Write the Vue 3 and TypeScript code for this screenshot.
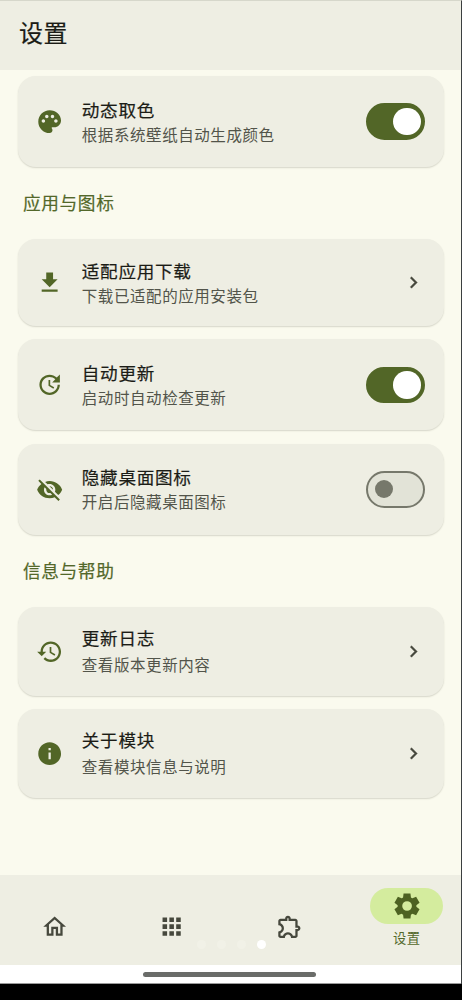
<script setup lang="ts">
interface Item {
  icon: string
  title: string
  desc: string
  size: 'tall' | 'short' | 'link'
  on?: boolean
}
interface Group {
  heading?: string
  items: Item[]
}

const icons: Record<string, string> = {
  palette:
    'M12 2C6.49 2 2 6.49 2 12s4.49 10 10 10c1.38 0 2.5-1.12 2.5-2.5 0-.61-.23-1.2-.64-1.67-.08-.1-.13-.21-.13-.33 0-.28.22-.5.5-.5H16c3.31 0 6-2.69 6-6 0-4.96-4.49-9-10-9zm5.5 11c-.83 0-1.5-.67-1.5-1.5s.67-1.5 1.5-1.5 1.5.67 1.5 1.5-.67 1.5-1.5 1.5zm-3-4c-.83 0-1.5-.67-1.5-1.5S13.67 6 14.5 6s1.5.67 1.5 1.5S15.33 9 14.5 9zM5 11.5c0-.83.67-1.5 1.5-1.5s1.5.67 1.5 1.5S7.33 13 6.5 13 5 12.33 5 11.5zm6-4c0 .83-.67 1.5-1.5 1.5S8 8.33 8 7.5 8.67 6 9.5 6s1.5.67 1.5 1.5z',
  download: 'M19 9h-4V3H9v6H5l7 7 7-7zM5 18v2h14v-2H5z',
  update:
    'M21 10.12h-6.78l2.74-2.82c-2.73-2.7-7.15-2.8-9.88-.1-2.73 2.71-2.73 7.08 0 9.79s7.15 2.71 9.88 0C18.32 15.65 19 14.08 19 12.1h2c0 1.98-.88 4.55-2.64 6.29-3.51 3.48-9.21 3.48-12.72 0-3.5-3.47-3.53-9.11-.02-12.58s9.14-3.47 12.65 0L21 3v7.12zM12.5 8v4.25l3.5 2.08-.72 1.21L11 13V8h1.5z',
  hidden:
    'M12 7c2.76 0 5 2.24 5 5 0 .65-.13 1.26-.36 1.83l2.92 2.92c1.51-1.26 2.7-2.89 3.43-4.75-1.73-4.39-6-7.5-11-7.5-1.4 0-2.74.25-3.98.7l2.16 2.16C10.74 7.13 11.35 7 12 7zM2 4.27l2.28 2.28.46.46C3.08 8.3 1.78 10.02 1 12c1.73 4.39 6 7.5 11 7.5 1.55 0 3.03-.3 4.38-.84l.42.42L19.73 22 21 20.73 3.27 3 2 4.27zM7.53 9.8l1.55 1.55c-.05.21-.08.43-.08.65 0 1.66 1.34 3 3 3 .22 0 .44-.03.65-.08l1.55 1.55c-.67.33-1.41.53-2.2.53-2.76 0-5-2.24-5-5 0-.79.2-1.53.53-2.2zm4.31-.78l3.15 3.15.02-.16c0-1.66-1.34-3-3-3l-.17.01z',
  history:
    'M13 3c-4.97 0-9 4.03-9 9H1l3.89 3.89.07.14L9 12H6c0-3.87 3.13-7 7-7s7 3.13 7 7-3.13 7-7 7c-1.93 0-3.68-.79-4.94-2.06l-1.42 1.42C8.27 19.99 10.51 21 13 21c4.97 0 9-4.03 9-9s-4.03-9-9-9zm-1 5v5l4.28 2.54.72-1.21-3.5-2.08V8H12z',
  info: 'M12 2C6.48 2 2 6.48 2 12s4.48 10 10 10 10-4.48 10-10S17.52 2 12 2zm1 15h-2v-6h2v6zm0-8h-2V7h2v2z',
}

const groups: Group[] = [
  { items: [{ icon: 'palette', title: '动态取色', desc: '根据系统壁纸自动生成颜色', size: 'tall', on: true }] },
  {
    heading: '应用与图标',
    items: [
      { icon: 'download', title: '适配应用下载', desc: '下载已适配的应用安装包', size: 'short' },
      { icon: 'update', title: '自动更新', desc: '启动时自动检查更新', size: 'tall', on: true },
      { icon: 'hidden', title: '隐藏桌面图标', desc: '开启后隐藏桌面图标', size: 'tall', on: false },
    ],
  },
  {
    heading: '信息与帮助',
    items: [
      { icon: 'history', title: '更新日志', desc: '查看版本更新内容', size: 'link' },
      { icon: 'info', title: '关于模块', desc: '查看模块信息与说明', size: 'link' },
    ],
  },
]

const tabs: string[] = [
  'M12 5.69l5 4.5V18h-2v-6H9v6H7v-7.81l5-4.5M12 3L2 12h3v8h6v-6h2v6h6v-8h3L12 3z',
  'M4 8h4V4H4v4zm6 12h4v-4h-4v4zm-6 0h4v-4H4v4zm0-6h4v-4H4v4zm6 0h4v-4h-4v4zm6-10v4h4V4h-4zm-6 4h4V4h-4v4zm6 6h4v-4h-4v4zm0 6h4v-4h-4v4z',
  'M10.5 4.5c.28 0 .5.22.5.5v2h6v6h2c.28 0 .5.22.5.5s-.22.5-.5.5h-2v6h-2.12c-.68-1.75-2.39-3-4.38-3s-3.7 1.25-4.38 3H4v-2.12c1.75-.68 3-2.39 3-4.38 0-1.99-1.24-3.7-2.99-4.38L4 7h6V5c0-.28.22-.5.5-.5m0-2C9.12 2.5 8 3.62 8 5H4c-1.1 0-1.99.9-1.99 2v3.8h.29c1.49 0 2.7 1.21 2.7 2.7s-1.21 2.7-2.7 2.7H2V20c0 1.1.9 2 2 2h3.8v-.3c0-1.49 1.21-2.7 2.7-2.7s2.7 1.21 2.7 2.7v.3H17c1.1 0 2-.9 2-2v-4c1.38 0 2.5-1.12 2.5-2.5S20.38 11 19 11V7c0-1.1-.9-2-2-2h-4c0-1.38-1.12-2.5-2.5-2.5z',
]
</script>

<template>
  <div class="screen">
    <div class="app">
      <header class="bar"><h1>设置</h1></header>
      <main>
        <section v-for="(g, i) in groups" :key="i">
          <h2 v-if="g.heading">{{ g.heading }}</h2>
          <div class="list">
            <div v-for="it in g.items" :key="it.title" class="card" :class="it.size">
              <svg class="lead" viewBox="0 0 24 24"><path :d="icons[it.icon]" /></svg>
              <div class="text">
                <div class="title">{{ it.title }}</div>
                <div class="desc">{{ it.desc }}</div>
              </div>
              <div v-if="it.on !== undefined" class="switch" :class="{ on: it.on }"><span class="thumb"></span></div>
              <svg v-else class="chevron" viewBox="0 0 24 24">
                <path d="M10 6L8.59 7.41 13.17 12l-4.58 4.59L10 18l6-6z" />
              </svg>
            </div>
          </div>
        </section>
      </main>
      <nav>
        <div v-for="(d, i) in tabs" :key="i" class="tab">
          <svg viewBox="0 0 24 24"><path :d="d" /></svg>
        </div>
        <div class="tab active">
          <div class="pill">
            <svg viewBox="0 -960 960 960">
              <path
                d="m370-80-16-128q-13-5-24.5-12T307-235l-119 50L78-375l103-78q-1-7-1-13.5v-27q0-6.5 1-13.5L78-585l110-190 119 50q11-8 23-15t24-12l16-128h220l16 128q13 5 24.5 12t22.5 15l119-50 110 190-103 78q1 7 1 13.5v27q0 6.500-2 13.500l103 78-110 190-118-50q-11 8-23 15t-24 12L590-80H370Zm112-245q64 0 109.500-45.500t45.500-109.500q0-64-45.500-109.500t-109.500-45.500q-65 0-110 45.500T327-480q0 64 45 109.500t110 45.500Z"
              />
            </svg>
          </div>
          <span>设置</span>
        </div>
        <div class="dots"><i></i><i></i><i></i><i class="current"></i></div>
      </nav>
      <div class="gesture"><span></span></div>
    </div>
  </div>
</template>

<style>
body {
  margin: 0;
  background: #000;
}
</style>

<style scoped>
.screen {
  height: 1000px;
  background: #000;
  font-family: 'Noto Sans CJK SC', 'Noto Sans', sans-serif;
}
.app {
  box-sizing: border-box;
  width: 462px;
  height: 984px;
  display: flex;
  flex-direction: column;
  background: #fafaee;
  border-right: 1px solid #3b3f40;
  border-top: 1px solid #d6d7cb;
}
svg {
  display: block;
  flex: none;
}
.bar {
  box-sizing: border-box;
  height: 68.500px;
  flex: none;
  padding: 13px 0 0 19px;
  background: #eeeee3;
}
h1 {
  margin: 0;
  font-size: 24px;
  line-height: 36px;
  font-weight: 400;
  letter-spacing: 0.5px;
  color: #1b1c16;
  -webkit-text-stroke: 0.2px #1b1c16;
}
main {
  flex: 1;
  padding: 6.500px 17.500px 0;
}
h2 {
  height: 72px;
  margin: 0;
  padding-left: 5.500px;
  font-size: 17.700px;
  line-height: 70.500px;
  font-weight: 400;
  letter-spacing: 0.6px;
  color: #53682a;
  -webkit-text-stroke: 0.2px #53682a;
}
.list {
  display: flex;
  flex-direction: column;
  gap: 13.300px;
}
.card {
  box-sizing: border-box;
  height: 91.200px;
  display: flex;
  align-items: center;
  padding: 0 18.500px;
  border-radius: 18px;
  background: #eeeee3;
  box-shadow: 0 1px 1.500px rgba(40, 42, 25, 0.17);
}
.card.short {
  height: 86.800px;
}
.card.link {
  height: 89px;
}
.lead {
  width: 27.300px;
  height: 27.300px;
  fill: #526627;
}
.text {
  flex: 1;
  padding-left: 18.500px;
}
.title {
  font-size: 17.600px;
  line-height: 26px;
  letter-spacing: 0.7px;
  color: #1b1c16;
  -webkit-text-stroke: 0.2px #1b1c16;
}
.desc {
  margin-top: -1px;
  padding-bottom: 1px;
  font-size: 15.500px;
  line-height: 24px;
  letter-spacing: 0.57px;
  color: #52544a;
}
.link .title {
  margin-top: -1px;
}
.link .desc {
  padding-top: 2px;
}
.switch {
  box-sizing: border-box;
  width: 59px;
  height: 36.400px;
  display: flex;
  align-items: center;
  padding-left: 7px;
  border: 2px solid #76786b;
  border-radius: 19px;
  background: #e2e3d7;
}
.thumb {
  width: 18.200px;
  height: 18.200px;
  border-radius: 50%;
  background: #76786b;
}
.switch.on {
  justify-content: flex-end;
  padding: 0 2.500px 0 0;
  border-color: #526627;
  background: #526627;
}
.on .thumb {
  width: 27.300px;
  height: 27.300px;
  background: #fff;
}
.chevron {
  width: 23px;
  height: 23px;
  fill: #46483d;
  stroke: #46483d;
  stroke-width: 0.4;
}
nav {
  position: relative;
  height: 90.300px;
  flex: none;
  display: flex;
  gap: 9px;
  background: #eeeee3;
}
.tab {
  width: 108.500px;
  display: flex;
  flex-direction: column;
  align-items: center;
  padding-top: 38.500px;
  box-sizing: border-box;
}
.tab svg {
  width: 27.300px;
  height: 27.300px;
  fill: #46483d;
}
.tab.active {
  padding-top: 13px;
}
.tab .pill {
  width: 73px;
  height: 36.500px;
  display: flex;
  align-items: center;
  justify-content: center;
  border-radius: 19px;
  background: #d4ec9e;
}
.tab .pill svg {
  width: 30px;
  height: 30px;
  fill: #4d6222;
}
.tab span {
  margin-top: 4px;
  font-size: 13.300px;
  line-height: 20px;
  letter-spacing: 0.5px;
  color: #53682a;
}
.dots {
  position: absolute;
  left: 197px;
  top: 65px;
  display: flex;
  gap: 11px;
}
.dots i {
  width: 9px;
  height: 9px;
  border-radius: 50%;
  background: #f1f1e7;
}
.dots .current {
  background: #fff;
}
.gesture {
  box-sizing: border-box;
  height: 19px;
  flex: none;
  padding: 7px 0 0 143px;
  background: #fff;
  border-bottom: 1px solid #9a9a9a;
}
.gesture span {
  display: block;
  width: 172.500px;
  height: 5px;
  border-radius: 3px;
  background: #6a6c69;
}
</style>
